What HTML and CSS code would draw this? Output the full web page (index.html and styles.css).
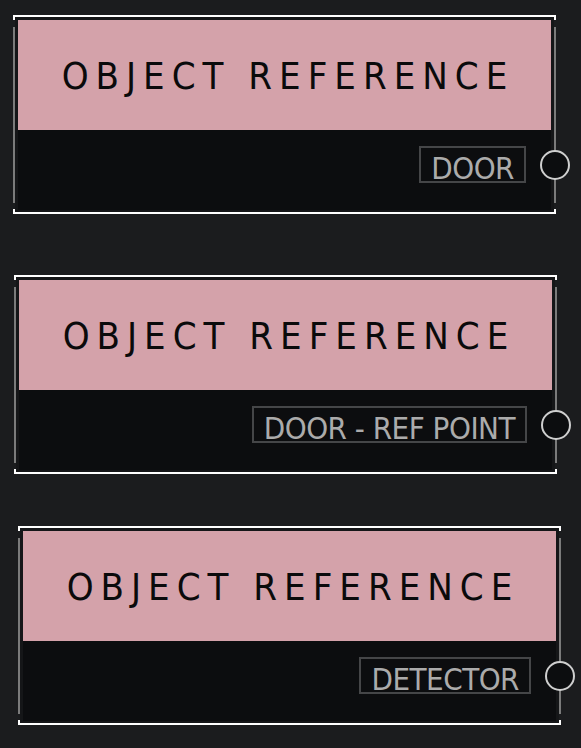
FILE: index.html
```html
<!DOCTYPE html>
<html lang="en">
<head>
<meta charset="utf-8">
<link rel="stylesheet" href="styles.css">
<title>Object reference nodes</title>
</head>
<body>
<div id="graph">

<div class="node" style="left:13px; top:15px">
  <div class="frame">
    <div class="head">OBJECT REFERENCE</div>
    <div class="body"><span class="tag">DOOR</span></div>
  </div>
  <span class="port"></span>
</div>

<div class="node" style="left:14px; top:275px">
  <div class="frame">
    <div class="head">OBJECT REFERENCE</div>
    <div class="body"><span class="tag">DOOR - REF POINT</span></div>
  </div>
  <span class="port"></span>
</div>

<div class="node" style="left:18px; top:526px">
  <div class="frame">
    <div class="head">OBJECT REFERENCE</div>
    <div class="body"><span class="tag">DETECTOR</span></div>
  </div>
  <span class="port"></span>
</div>

</div>
</body>
</html>
```

FILE: styles.css
```css
html, body {
  margin: 0;
  padding: 0;
  background: #1b1c1e;
}
#graph {
  position: relative;
  width: 581px;
  height: 748px;
  overflow: hidden;
  font-family: "DejaVu Sans", sans-serif;
  font-stretch: condensed;
}

/* node with white corner brackets and grey side rails */
.node {
  position: absolute;
  width: 543px;
  height: 199px;
  box-sizing: border-box;
  padding: 5px 5px 4px;
  background:
    linear-gradient(#fff, #fff) left top / 100% 2px no-repeat,
    linear-gradient(#fff, #fff) left bottom / 100% 2px no-repeat,
    linear-gradient(#fff, #fff) left top / 2px 5px no-repeat,
    linear-gradient(#fff, #fff) right top / 2px 5px no-repeat,
    linear-gradient(#fff, #fff) left bottom / 2px 5px no-repeat,
    linear-gradient(#fff, #fff) right bottom / 2px 5px no-repeat,
    linear-gradient(#7b7b7b, #7b7b7b) left 12px / 2px 176px no-repeat,
    linear-gradient(#7b7b7b, #7b7b7b) right 12px / 2px 176px no-repeat,
    linear-gradient(#151618, #151618) 2px 2px / 539px 195px no-repeat;
}
.frame {
  display: flex;
  flex-direction: column;
  height: 100%;
}
.head {
  height: 110px;
  box-sizing: border-box;
  padding: 2px 0 0 7px;
  background: #d4a2aa;
  color: #0a0a0b;
  font-size: 38px;
  letter-spacing: 7px;
  display: flex;
  align-items: center;
  justify-content: center;
}
.body {
  flex: 1;
  background: #0c0d0f;
  display: flex;
  justify-content: flex-end;
  align-items: flex-start;
  padding: 16px 25px 0 0;
}
.tag {
  height: 37px;
  box-sizing: border-box;
  border: 2px solid #454648;
  padding: 5px 10px 0 10px;
  line-height: 30px;
  font-size: 31px;
  letter-spacing: -0.5px;
  color: #ababab;
  white-space: nowrap;
}
.port {
  position: absolute;
  left: 527px;
  top: 135px;
  width: 30px;
  height: 30px;
  box-sizing: border-box;
  border: 2px solid #cfcfcf;
  border-radius: 50%;
  background: #0c0d0f;
}
```
